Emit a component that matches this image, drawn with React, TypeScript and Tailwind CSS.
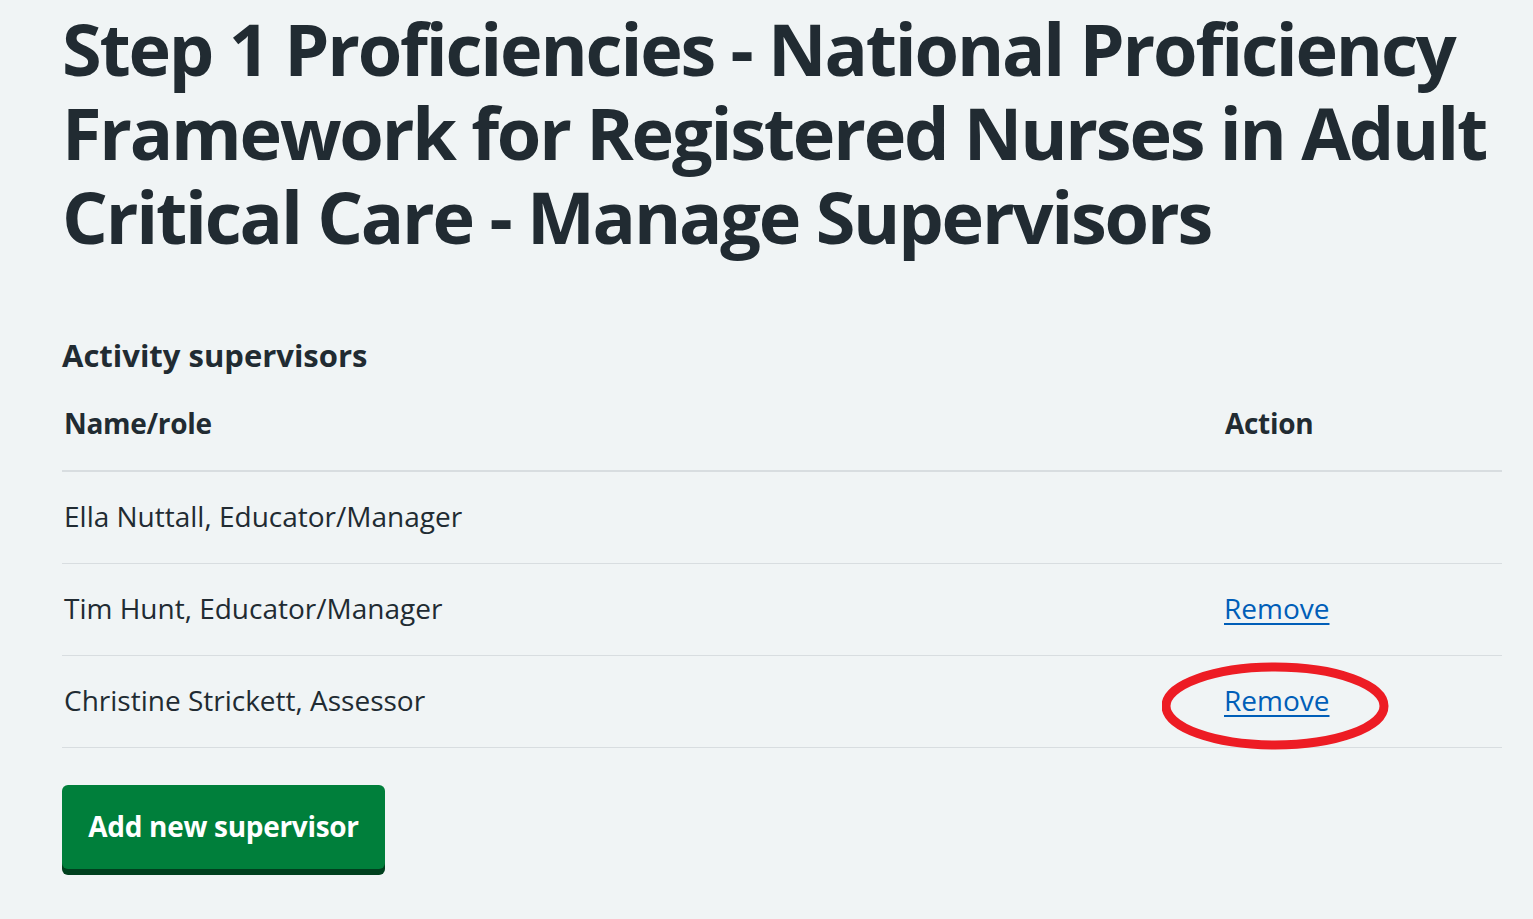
import React from "react";

const rows = [
  { name: "Ella Nuttall, Educator/Manager", remove: false, circled: false },
  { name: "Tim Hunt, Educator/Manager", remove: true, circled: false },
  { name: "Christine Strickett, Assessor", remove: true, circled: true },
];

export default function App() {
  return (
    <div
      className="min-h-[919px] w-full bg-[#f0f4f5] text-[#212b32]"
      style={{ fontFamily: '"Open Sans", "Noto Sans", Arial, sans-serif' }}
    >
      <div className="pl-[62px] pr-[31px] pt-[6px]">
        <h1 className="m-0 whitespace-nowrap text-[72px] font-bold leading-[84px] tracking-[-2.2px]">
          Step 1 Proficiencies - National Proficiency
          <br />
          Framework for Registered Nurses in Adult
          <br />
          Critical Care - Manage Supervisors
        </h1>

        <div className="mt-[77px]">
          <div className="text-[31px] font-bold leading-[40px]">Activity supervisors</div>
          <div className="mt-[27px] flex border-b-2 border-[#d8dde0] pb-[26px] text-[28px] font-bold leading-[42px] tracking-[-0.3px]">
            <div className="flex-1 pl-[2px]">Name/role</div>
            <div className="w-[277px]">Action</div>
          </div>
          {rows.map((r) => (
            <div
              key={r.name}
              className="flex h-[92px] items-center border-b border-[#d8dde0] pb-[4px] text-[28px] leading-[42px]"
            >
              <div className="flex-1 pl-[2px]">{r.name}</div>
              <div className="relative w-[278px]">
                {r.remove && (
                  <a href="#" className="text-[#005eb8] underline decoration-[2px] underline-offset-[4px]">
                    Remove
                  </a>
                )}
                {r.circled && (
                  <svg
                    className="pointer-events-none absolute left-[-62px] top-[-21px]"
                    width="230"
                    height="92"
                    viewBox="0 0 230 92"
                  >
                    <ellipse cx="113" cy="48" rx="109" ry="39" fill="none" stroke="#ed1c24" strokeWidth="9" />
                  </svg>
                )}
              </div>
            </div>
          ))}
          <button className="mt-[37px] flex h-[84px] w-[323px] items-center justify-center rounded-[6px] bg-[#007f3b] pb-[2px] text-[28px] font-bold leading-[42px] tracking-[-0.3px] text-white shadow-[0_6px_0_#00401e]">
            Add new supervisor
          </button>
        </div>
      </div>
    </div>
  );
}
